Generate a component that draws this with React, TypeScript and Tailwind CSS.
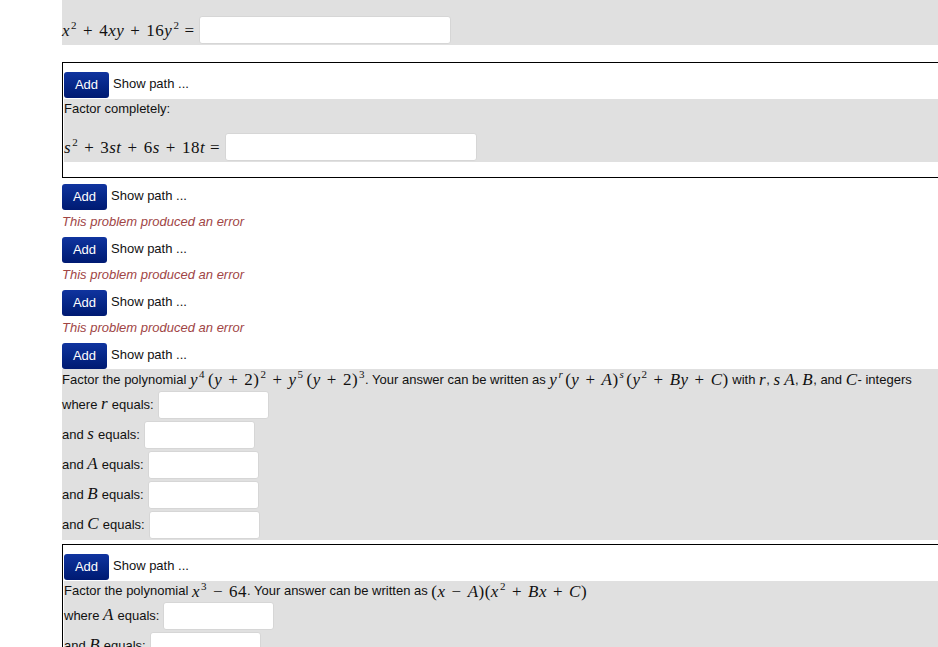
import React from "react";

const MATH = "font-['Liberation_Serif',serif] text-[17px] tracking-[0.5px] leading-none whitespace-nowrap";

function V({ c }: { c: string }) {
  return <span className="italic">{c}</span>;
}
function Sup({ c, italic }: { c: string; italic?: boolean }) {
  return (
    <span className={`relative top-[-7px] text-[11px] ml-[1px] ${italic ? "italic" : ""}`}>{c}</span>
  );
}
function Op({ c }: { c: string }) {
  return <span className={c === "=" ? "mx-[5px]" : "mx-[6px]"}>{c}</span>;
}
function M({ children }: { children: React.ReactNode }) {
  return <span className={MATH}>{children}</span>;
}

function Field({ w }: { w: string }) {
  return (
    <input
      readOnly
      className={`bg-white border border-[#d6d6d6] rounded-[3px] h-[28px] ${w} outline-none`}
    />
  );
}

function AddRow() {
  return (
    <div className="flex items-start h-[26px]">
      <button className="w-[45px] h-[26px] rounded-[3px] bg-gradient-to-b from-[#10349f] to-[#001a72] text-white text-[13px] leading-[26px] text-center">
        Add
      </button>
      <span className="ml-[4px] leading-[23px] text-[#111]">Show path ...</span>
    </div>
  );
}

function ErrorLine() {
  return (
    <div className="h-[27px] pt-[4px] leading-[15px] italic text-[#a04545]">This problem produced an error</div>
  );
}

function Row({ label, w }: { label?: React.ReactNode; w?: string }) {
  return (
    <div className="flex items-center h-[30px]">
      <span className="mr-[4px] whitespace-nowrap">{label}</span>
      <Field w={w ?? "w-[111px]"} />
    </div>
  );
}

export default function App() {
  return (
    <div className="w-[938px] h-[647px] overflow-hidden bg-white text-[13px] text-[#111] font-['Liberation_Sans',Arial,sans-serif]">
      <div className="ml-[62px] w-[1000px]">
        {/* tail of previous problem */}
        <div className="bg-[#e0e0e0] h-[45px] flex items-end pb-[1px]">
          <div className="flex items-center h-[28px]">
            <M>
              <V c="x" />
              <Sup c="2" />
              <Op c="+" />4<V c="xy" />
              <Op c="+" />16<V c="y" />
              <Sup c="2" />
              <Op c="=" />
            </M>
            <Field w="w-[252px]" />
          </div>
        </div>

        {/* box 1 */}
        <div className="mt-[17px] border border-black pl-[1px] pt-[9px] pb-[15px]">
          <div className="h-[27px]">
            <AddRow />
          </div>
          <div className="bg-[#e0e0e0]">
            <div className="h-[18px] leading-[20px]">Factor completely:</div>
            <div className="h-[45px] flex items-end pb-[1px]">
              <div className="flex items-center h-[28px]">
                <M>
                  <V c="s" />
                  <Sup c="2" />
                  <Op c="+" />3<V c="st" />
                  <Op c="+" />6<V c="s" />
                  <Op c="+" />18<V c="t" />
                  <Op c="=" />
                </M>
                <Field w="w-[252px]" />
              </div>
            </div>
          </div>
        </div>

        {/* error problems */}
        <div className="pt-[6px]">
          <AddRow />
          <ErrorLine />
          <AddRow />
          <ErrorLine />
          <AddRow />
          <ErrorLine />
          <AddRow />
        </div>

        {/* problem 4 */}
        <div className="bg-[#e0e0e0] h-[171px]">
          <div className="h-[21px] flex items-center whitespace-nowrap">
            <span>Factor the polynomial&nbsp;</span>
            <M>
              <V c="y" />
              <Sup c="4" />
              <span className="ml-[3px]">(</span>
              <V c="y" />
              <Op c="+" />2)
              <Sup c="2" />
              <Op c="+" />
              <V c="y" />
              <Sup c="5" />
              <span className="ml-[3px]">(</span>
              <V c="y" />
              <Op c="+" />2)
              <Sup c="3" />
            </M>
            <span>. Your answer can be written as&nbsp;</span>
            <M>
              <V c="y" />
              <Sup c="r" italic />
              <span className="ml-[2px]">(</span>
              <V c="y" />
              <Op c="+" />
              <V c="A" />)
              <Sup c="s" italic />
              <span className="ml-[2px]">(</span>
              <V c="y" />
              <Sup c="2" />
              <Op c="+" />
              <V c="By" />
              <Op c="+" />
              <V c="C" />)
            </M>
            <span>&nbsp;with&nbsp;</span>
            <M>
              <V c="r" />
            </M>
            <span>,&nbsp;</span>
            <M>
              <V c="s" />
            </M>
            <span>&nbsp;</span>
            <M>
              <V c="A" />
            </M>
            <span>,&nbsp;</span>
            <M>
              <V c="B" />
            </M>
            <span>, and&nbsp;</span>
            <M>
              <V c="C" />
            </M>
            <span>- integers</span>
          </div>
          <Row
            label={
              <>
                where <M><V c="r" /></M> equals:
              </>
            }
          />
          <Row
            label={
              <>
                and <M><V c="s" /></M> equals:
              </>
            }
          />
          <Row
            label={
              <>
                and <M><V c="A" /></M> equals:
              </>
            }
          />
          <Row
            label={
              <>
                and <M><V c="B" /></M> equals:
              </>
            }
          />
          <Row
            label={
              <>
                and <M><V c="C" /></M> equals:
              </>
            }
          />
        </div>

        {/* box 2 */}
        <div className="mt-[4px] border border-black pl-[1px] pt-[9px] pb-[15px]">
          <div className="h-[27px]">
            <AddRow />
          </div>
          <div className="bg-[#e0e0e0]">
            <div className="h-[20px] flex items-center whitespace-nowrap">
              <span>Factor the polynomial&nbsp;</span>
              <M>
                <V c="x" />
                <Sup c="3" />
                <Op c="−" />64
              </M>
              <span>. Your answer can be written as&nbsp;</span>
              <M>
                (<V c="x" />
                <Op c="−" />
                <V c="A" />)(<V c="x" />
                <Sup c="2" />
                <Op c="+" />
                <V c="Bx" />
                <Op c="+" />
                <V c="C" />)
              </M>
            </div>
            <Row
              label={
                <>
                  where <M><V c="A" /></M> equals:
                </>
              }
            />
            <Row
              label={
                <>
                  and <M><V c="B" /></M> equals:
                </>
              }
            />
            <Row
              label={
                <>
                  and <M><V c="C" /></M> equals:
                </>
              }
            />
          </div>
        </div>
      </div>
    </div>
  );
}
